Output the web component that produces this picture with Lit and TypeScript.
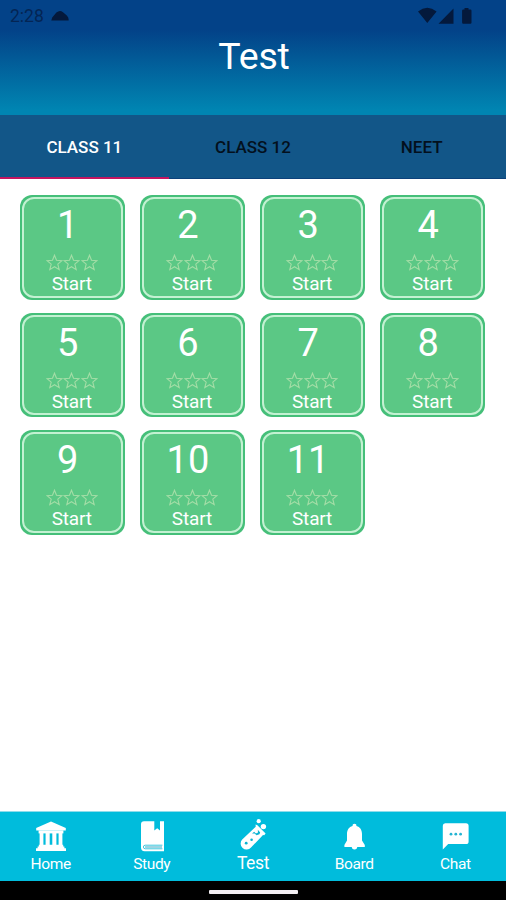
import { LitElement, html, css, svg } from "lit";
import { customElement, state } from "lit/decorators.js";
import { classMap } from "lit/directives/class-map.js";

const icons = {
  home: svg`<svg width="32" height="32" viewBox="0 0 32 32" fill="#fff">
    <path d="M16 1.4 30.8 8V10.6H1.2V8Z"/>
    <path d="M3.6 10.4h24.8v3H3.6z"/>
    <path d="M4.6 13h3.8v12H4.6zM10.6 13h4.1v12h-4.1zM17.3 13h4.1v12h-4.1zM23.6 13h3.8v12h-3.8z"/>
    <path d="M3.8 24.8h24.4v2.2H3.8zM2.6 26.6h26.8v1.8H2.6zM1 28.2h30V31H1z"/></svg>`,
  study: svg`<svg width="32" height="32" viewBox="0 0 32 32" fill="#fff">
    <path d="M8 1.2H18.3V10.6L21.2 8.2 24 10.6V1.2H28V31.2H8.6A3.6 3.6 0 0 1 5 27.6V4.2A3 3 0 0 1 8 1.2Z"/>
    <path fill="none" stroke="#3cc8df" stroke-width="1" d="M26.4 25.2H9.2a1.7 1.7 0 0 0 0 3.6H26.4"/>
    <path fill="#3aa9c4" d="M9 26.5h17v1H9z"/></svg>`,
  test: svg`<svg width="32" height="34" viewBox="0 0 32 34" fill="#fff">
    <circle cx="21.7" cy="4.2" r="2.1"/><circle cx="26.4" cy="9.6" r="2.7"/>
    <path d="M18.6 7.6 20.4 8.2 28.6 16.4 27.2 18.2 26 18 14 30.6A5.9 5.9 0 0 1 5.2 22.6L18.7 9.8Z"/>
    <path fill="#0bb3d2" d="M15 16.6 17.2 14.8 18.9 16.4 21 15.4 20.8 12.8 23.2 15.4 22.4 17.2 19.6 18.2 17.6 16.6Z"/>
    <g fill="#0bb3d2"><circle cx="9.2" cy="26.2" r="1.4"/><circle cx="14.6" cy="22.8" r="1.3"/></g></svg>`,
  board: svg`<svg width="32" height="32" viewBox="0 0 32 32" fill="#fff">
    <path d="M16.5 3.8A2 2 0 0 1 18.5 6C22.1 6.9 24 10.1 24 14V20.4L26.8 25V27H6.4V25L9 20.4V14C9 10.1 10.9 6.9 14.5 6A2 2 0 0 1 16.5 3.8Z"/>
    <path d="M13.8 27h5.4a2.7 2.4 0 0 1-5.4 0z"/></svg>`,
  chat: svg`<svg width="32" height="32" viewBox="0 0 32 32" fill="#fff">
    <path d="M6.2 3.2H27A2.6 2.6 0 0 1 29.6 5.8V21.4A2.6 2.6 0 0 1 27 24H9.2L3.8 29.6V5.8A2.6 2.6 0 0 1 6.2 3.2Z"/>
    <g fill="#25b4d2"><circle cx="12" cy="14.2" r="1.4"/><circle cx="16.8" cy="14.2" r="1.4"/><circle cx="21.6" cy="14.2" r="1.4"/></g></svg>`,
};

const star = svg`<svg width="17.8" height="17" viewBox="0 0 17.8 17" fill="none" stroke="#a3dda6" stroke-width="1.1">
  <path d="M8.5 1.2 10.5 6.3 15.9 6.7 11.8 10.2 13.2 15.6 8.5 12.7 3.8 15.6 5.2 10.2 1.1 6.7 6.5 6.3Z"/></svg>`;

@customElement("test-card")
class TestCard extends LitElement {
  static properties = { number: { type: Number } };
  declare number: number;

  static styles = css`
    :host {
      display: block;
      box-sizing: border-box;
      height: 104.5px;
      padding: 2px;
      border-radius: 12px;
      background: #45bf79;
      color: #fff;
    }
    .face {
      box-sizing: border-box;
      height: 100%;
      border: 2px solid #c3f1d2;
      border-radius: 12px;
      background: #5bc885;
      display: flex;
      flex-direction: column;
      align-items: center;
    }
    .number {
      font-size: 38px;
      line-height: 44px;
      margin: 4px 9px 0 0;
    }
    .stars {
      display: flex;
      height: 17px;
      margin-top: 7px;
    }
    .action {
      font-size: 19px;
      line-height: 22px;
      margin: 2px 1px 0 0;
      letter-spacing: -0.15px;
    }
  `;

  render() {
    return html`<div class="face">
      <div class="number">${this.number}</div>
      <div class="stars">${[0, 1, 2].map(() => star)}</div>
      <div class="action">Start</div>
    </div>`;
  }
}

@customElement("app-root")
class AppRoot extends LitElement {
  @state() tab = 0;

  static styles = css`
    :host {
      display: flex;
      flex-direction: column;
      height: 900px;
      width: 506px;
      overflow: hidden;
      background: #fff;
      font-family: Roboto, sans-serif;
    }
    header {
      height: 115px;
      flex: none;
      background: linear-gradient(#034288 0, #034288 30px, #0085b2 110px);
    }
    .status {
      display: flex;
      align-items: center;
      height: 32px;
      padding: 0 33px 0 10px;
      color: #042554;
      font-size: 17.5px;
    }
    .status svg {
      flex: none;
    }
    .cloud {
      margin: -2px 0 0 7px;
    }
    .signals {
      margin-left: auto;
    }
    h1 {
      margin: 2px 0 0 2px;
      font-weight: 400;
      font-size: 37.5px;
      line-height: 44px;
      letter-spacing: -0.2px;
      text-align: center;
      color: #fff;
    }
    .tabs {
      flex: none;
      display: grid;
      grid-template-columns: repeat(3, 1fr);
      height: 64px;
      background: #125688;
    }
    .tab {
      box-sizing: border-box;
      height: 64px;
      padding-top: 1px;
      border-bottom: 1px solid #0c417b;
      display: flex;
      align-items: center;
      justify-content: center;
      font-size: 17px;
      font-weight: 500;
      color: #03101d;
    }
    .tab.selected {
      color: #fff;
      border-bottom: 2px solid #c41560;
      padding-top: 2px;
    }
    main {
      flex: 1;
      padding: 16.3px 21px 0 20px;
      display: grid;
      grid-template-columns: repeat(4, 104.5px);
      justify-content: space-between;
      align-content: start;
      row-gap: 13px;
    }
    nav {
      flex: none;
      box-sizing: border-box;
      height: 70px;
      border-top: 1px solid #8edceb;
      background: #00bcdc;
      display: grid;
      grid-template-columns: repeat(5, 1fr);
      color: #fff;
    }
    .item {
      display: flex;
      flex-direction: column;
      align-items: center;
      padding-top: 8px;
      font-size: 15.5px;
      line-height: 18px;
      letter-spacing: -0.35px;
    }
    .item span {
      margin-top: 2.5px;
    }
    .item.current {
      padding-top: 5px;
      font-size: 17.5px;
    }
    .gestures {
      flex: none;
      height: 19px;
      background: #000;
      display: flex;
      justify-content: center;
      align-items: center;
    }
    .handle {
      width: 89px;
      height: 4px;
      margin: 2px 0 0 1px;
      border-radius: 1px;
      background: #f2eef2;
    }
  `;

  render() {
    const items: [string, keyof typeof icons][] = [
      ["Home", "home"],
      ["Study", "study"],
      ["Test", "test"],
      ["Board", "board"],
      ["Chat", "chat"],
    ];
    return html`
      <header>
        <div class="status">
          <span>2:28</span>
          <svg class="cloud" width="18" height="11" viewBox="0 0 18 11" fill="#04193c">
            <path d="M.3 10.6 1.2 7.6 5.4 2.6Q8.8-.6 12 2.2L15.8 5.4Q18 7.4 17.6 10.6z"/>
          </svg>
          <svg class="signals" width="55" height="18" viewBox="0 0 55 18" fill="#04193c">
            <path d="M0 4.4Q9.3-2.8 18.6 4.4L9.3 16zM20.5 16.8 35.5 1.6V16.8zM46.5 1h4v1.5h1.8q1.2 0 1.2 1.2v11.9q0 1.2-1.2 1.2h-7q-1.2 0-1.2-1.2V3.7q0-1.2 1.2-1.2h1.2z"/>
          </svg>
        </div>
        <h1>Test</h1>
      </header>
      <div class="tabs">
        ${["CLASS 11", "CLASS 12", "NEET"].map(
          (name, i) => html`<div
            class=${classMap({ tab: true, selected: i === this.tab })}
            @click=${() => (this.tab = i)}
          >${name}</div>`
        )}
      </div>
      <main>
        ${Array.from({ length: 11 }, (_, i) => html`<test-card .number=${i + 1}></test-card>`)}
      </main>
      <nav>
        ${items.map(
          ([label, icon]) => html`<div class=${classMap({ item: true, current: icon === "test" })}>
            ${icons[icon]}<span>${label}</span>
          </div>`
        )}
      </nav>
      <div class="gestures"><div class="handle"></div></div>
    `;
  }
}
